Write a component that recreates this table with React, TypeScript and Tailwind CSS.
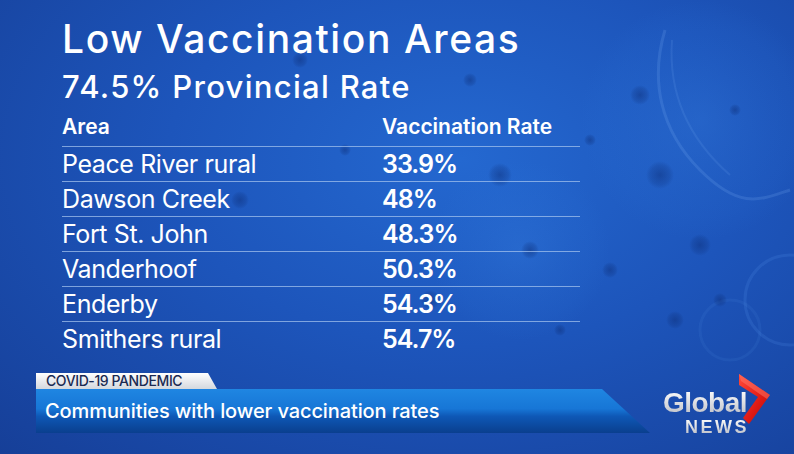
import React from "react";

const rows: [string, string][] = [
  ["Peace River rural", "33.9%"],
  ["Dawson Creek", "48%"],
  ["Fort St. John", "48.3%"],
  ["Vanderhoof", "50.3%"],
  ["Enderby", "54.3%"],
  ["Smithers rural", "54.7%"],
];

function Backdrop() {
  const dots: [number, number, number][] = [
    [590, 140, 6], [640, 95, 10], [660, 175, 14], [700, 245, 11], [675, 320, 9],
    [720, 300, 7], [610, 270, 8], [500, 175, 12], [430, 300, 10], [300, 60, 8],
    [470, 80, 7], [240, 200, 9], [150, 340, 7], [560, 330, 6], [735, 110, 6],
    [400, 230, 7], [530, 250, 9], [345, 150, 6],
  ];
  return (
    <svg className="absolute inset-0" width="794" height="454" viewBox="0 0 794 454">
      <defs>
        <radialGradient id="cell" cx="50%" cy="50%" r="50%">
          <stop offset="0%" stopColor="#0d2f7a" stopOpacity="0.5" />
          <stop offset="70%" stopColor="#0d2f7a" stopOpacity="0.22" />
          <stop offset="100%" stopColor="#0d2f7a" stopOpacity="0" />
        </radialGradient>
        <radialGradient id="big" cx="50%" cy="50%" r="50%">
          <stop offset="0%" stopColor="#3b86e6" stopOpacity="0.25" />
          <stop offset="80%" stopColor="#2a70d6" stopOpacity="0.12" />
          <stop offset="100%" stopColor="#2a70d6" stopOpacity="0" />
        </radialGradient>
      </defs>
      <circle cx="700" cy="120" r="120" fill="url(#big)" />
      <circle cx="520" cy="250" r="90" fill="url(#big)" />
      <path d="M665 30 C 650 80, 660 130, 700 170 S 760 200, 790 190" stroke="#8fc0ff" strokeOpacity="0.16" strokeWidth="3" fill="none" />
      <path d="M672 40 C 668 95, 690 140, 730 175" stroke="#8fc0ff" strokeOpacity="0.12" strokeWidth="2" fill="none" />
      <circle cx="790" cy="300" r="45" fill="none" stroke="#5d9cf0" strokeOpacity="0.16" strokeWidth="3" />
      <circle cx="730" cy="330" r="30" fill="none" stroke="#5d9cf0" strokeOpacity="0.1" strokeWidth="3" />
      {dots.map(([x, y, r], i) => (
        <circle key={i} cx={x} cy={y} r={r} fill="url(#cell)" />
      ))}
    </svg>
  );
}

function Logo() {
  return (
    <div className="relative w-[120px] h-[62px]">
      <div className="absolute left-[0px] top-[16px] flex flex-col items-end w-[87px] [font-family:'Liberation_Sans',Arial,sans-serif] font-bold">
        <span className="text-[28px] leading-none tracking-[-0.5px] bg-gradient-to-b from-white to-[#b9bcc4] bg-clip-text text-transparent">
          Global
        </span>
        <span className="text-[18px] leading-none tracking-[2.5px] mt-[1px] mr-[-2px] bg-gradient-to-b from-white to-[#b9bcc4] bg-clip-text text-transparent">
          NEWS
        </span>
      </div>
      <svg className="absolute left-[78px] top-0" width="36" height="54" viewBox="0 0 36 54">
        <defs>
          <linearGradient id="red" x1="0" y1="0" x2="1" y2="1">
            <stop offset="0%" stopColor="#ff4a3a" />
            <stop offset="60%" stopColor="#e01a14" />
            <stop offset="100%" stopColor="#a80c0c" />
          </linearGradient>
        </defs>
        <polygon points="1,1 32,22 11,51 5,45 20,24 1,12" fill="url(#red)" />
        <polygon points="1,1 32,22 29,26 3,8" fill="#ff7a6a" opacity="0.5" />
      </svg>
    </div>
  );
}

export default function App() {
  return (
    <div className="relative w-[794px] h-[454px] overflow-hidden bg-[radial-gradient(ellipse_at_58%_35%,#2468d0_0%,#1d55bb_45%,#163f98_100%)] [font-family:Inter,'Noto_Sans',sans-serif] text-white">
      <Backdrop />
      <div className="relative flex flex-col">
        <div className="flex flex-col pl-[62px] pt-[19px]">
          <h1 className="text-[39px] leading-none font-medium tracking-[1.6px]">Low Vaccination Areas</h1>
          <h2 className="mt-[13px] text-[31px] leading-none font-medium tracking-[1.3px]">74.5% Provincial Rate</h2>
          <div className="mt-[14px] flex h-[30px] w-[518px] items-start text-[21px] leading-none font-semibold tracking-[0px]">
            <span className="w-[320px]">Area</span>
            <span>Vaccination Rate</span>
          </div>
          <div className="flex flex-col w-[518px]">
            {rows.map(([area, rate]) => (
              <div key={area} className="flex h-[35px] items-center border-t border-[#a9c8f0]/70 text-[25px] leading-none">
                <span className="w-[320px] font-normal tracking-[-0.4px]">{area}</span>
                <span className="font-semibold tracking-[-1px]">{rate}</span>
              </div>
            ))}
          </div>
        </div>
        <div className="mt-[17px] flex pl-[36px]">
          <div className="flex flex-col w-[614px]">
            <div className="h-[16px] w-[181px] bg-gradient-to-b from-white to-[#d4d8de] [clip-path:polygon(0_0,172px_0,181px_100%,0_100%)] flex items-center pl-[10px]">
              <span className="text-[14px] leading-none font-medium tracking-[-0.4px] text-[#1b2a52]">COVID-19 PANDEMIC</span>
            </div>
            <div className="relative h-[44px] w-[614px] bg-[linear-gradient(180deg,#1f86e2_0%,#1776d6_45%,#0e58b6_62%,#0a3f8e_100%)] [clip-path:polygon(0_0,566px_0,614px_100%,0_100%)] flex items-center pl-[9px]">
              <span className="text-[20px] leading-none font-medium tracking-[-0.1px] text-white">Communities with lower vaccination rates</span>
            </div>
          </div>
          <div className="ml-[10px]">
            <Logo />
          </div>
        </div>
      </div>
    </div>
  );
}
